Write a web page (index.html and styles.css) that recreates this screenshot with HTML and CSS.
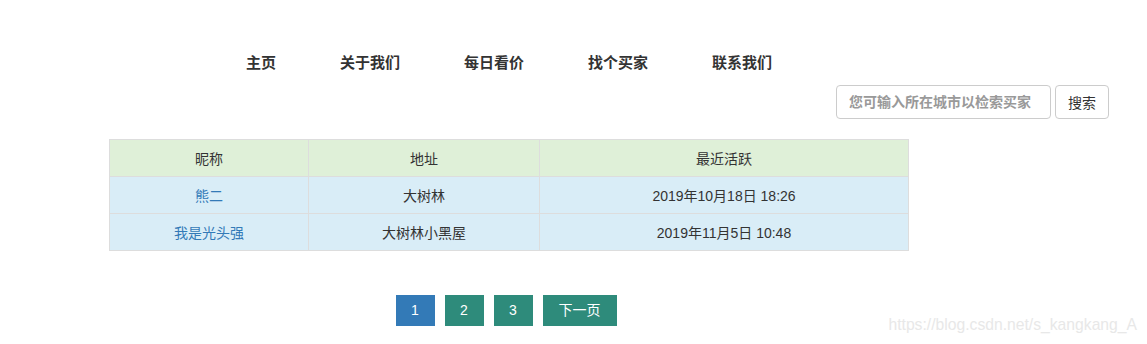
FILE: index.html
```html
<!DOCTYPE html>
<html lang="zh-CN">
<head>
    <meta charset="UTF-8">
    <title>买家列表</title>
    <link rel="stylesheet" href="styles.css">
</head>
<body>
    <div class="wrapper">
        <ul class="nav">
            <li><a href="#">主页</a></li>
            <li><a href="#">关于我们</a></li>
            <li><a href="#">每日看价</a></li>
            <li><a href="#">找个买家</a></li>
            <li><a href="#">联系我们</a></li>
        </ul>
    </div>

    <form class="search">
        <input type="text" placeholder="您可输入所在城市以检索买家">
        <button type="button">搜索</button>
    </form>

    <div class="wrapper">
        <table class="buyers">
            <thead>
                <tr>
                    <th class="col-name">昵称</th>
                    <th class="col-addr">地址</th>
                    <th>最近活跃</th>
                </tr>
            </thead>
            <tbody>
                <tr>
                    <td><a href="#">熊二</a></td>
                    <td>大树林</td>
                    <td>2019年10月18日 18:26</td>
                </tr>
                <tr>
                    <td><a href="#">我是光头强</a></td>
                    <td>大树林小黑屋</td>
                    <td>2019年11月5日 10:48</td>
                </tr>
            </tbody>
        </table>

        <div class="pager">
            <a href="#" class="active">1</a>
            <a href="#">2</a>
            <a href="#">3</a>
            <a href="#" class="next">下一页</a>
        </div>
    </div>

    <div class="watermark">https://blog.csdn.net/s_kangkang_A</div>
</body>
</html>
```

FILE: styles.css
```css
body {
    margin: 0;
    font-family: "Liberation Sans", "Noto Sans CJK SC", sans-serif;
    font-size: 14px;
    color: #333;
    background: #fff;
}

.wrapper {
    width: 800px;
    margin-left: 109px;
}

.nav {
    list-style: none;
    margin: 0;
    padding: 50px 0 0 0;
    display: flex;
    justify-content: center;
    gap: 64px;
}

.nav a {
    display: block;
    line-height: 26px;
    font-size: 15px;
    font-weight: bold;
    color: #333;
    text-decoration: none;
}

.search {
    display: flex;
    justify-content: flex-end;
    gap: 4px;
    margin: 9px 0 0 0;
    padding-right: 38px;
}

.search input {
    box-sizing: border-box;
    width: 215px;
    height: 34px;
    padding: 6px 12px;
    border: 1px solid #ccc;
    border-radius: 4px;
    font-family: inherit;
    font-size: 14px;
}

.search input::placeholder {
    color: #999;
    font-weight: bold;
}

.search button {
    box-sizing: border-box;
    height: 34px;
    padding: 6px 12px;
    background: #fff;
    border: 1px solid #ccc;
    border-radius: 4px;
    font-family: inherit;
    font-size: 14px;
    color: #333;
}

.buyers {
    width: 800px;
    margin-top: 20px;
    border-collapse: collapse;
    border: 1px solid #ddd;
}

.buyers th,
.buyers td {
    height: 36px;
    padding: 0 8px;
    border: 1px solid #ddd;
    text-align: center;
    font-weight: normal;
}

.buyers thead tr {
    background: #dff0d8;
}

.buyers tbody tr {
    background: #d9edf7;
}

.buyers .col-name {
    width: 182px;
}

.buyers .col-addr {
    width: 214px;
}

.buyers a {
    color: #337ab7;
    text-decoration: none;
}

.pager {
    display: flex;
    justify-content: center;
    gap: 10px;
    margin-top: 44px;
    padding-right: 6px;
}

.pager a {
    display: block;
    padding: 6px 15px;
    line-height: 19px;
    min-width: 9px;
    text-align: center;
    background: #2e8b7b;
    color: #fff;
    text-decoration: none;
}

.pager a.next {
    padding: 6px 16px;
}

.pager a.active {
    background: #337ab7;
}

.watermark {
    position: absolute;
    top: 316px;
    right: 10px;
    font-size: 15.7px;
    color: #e8e8e8;
}
```
